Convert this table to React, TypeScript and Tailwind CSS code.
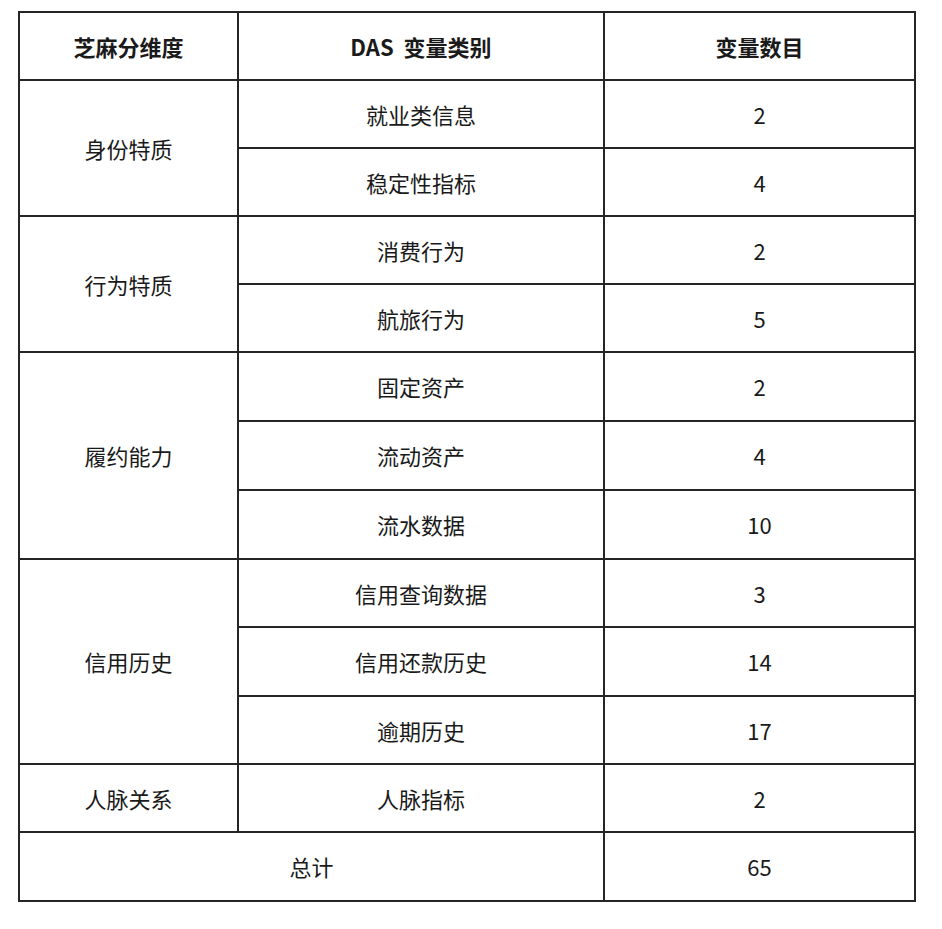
import React from "react";

const font = { fontFamily: '"Noto Sans CJK SC", "Noto Sans", sans-serif' };

type Row = { dim?: string; span?: number; cat: string; n: string; h: number };

const rows: Row[] = [
  { dim: "身份特质", span: 2, cat: "就业类信息", n: "2", h: 68 },
  { cat: "稳定性指标", n: "4", h: 68 },
  { dim: "行为特质", span: 2, cat: "消费行为", n: "2", h: 68 },
  { cat: "航旅行为", n: "5", h: 68 },
  { dim: "履约能力", span: 3, cat: "固定资产", n: "2", h: 69 },
  { cat: "流动资产", n: "4", h: 69 },
  { cat: "流水数据", n: "10", h: 69 },
  { dim: "信用历史", span: 3, cat: "信用查询数据", n: "3", h: 68 },
  { cat: "信用还款历史", n: "14", h: 69 },
  { cat: "逾期历史", n: "17", h: 68 },
  { dim: "人脉关系", span: 1, cat: "人脉指标", n: "2", h: 68 },
];

export default function App() {
  const cell = "border-2 border-[#252525] text-center align-middle p-0";
  return (
    <div className="w-[942px] h-[929px] bg-white pt-[11px] pl-[18px]" style={font}>
      <table className="border-collapse w-[896px] text-[22px] text-[#1a1a1a] table-fixed">
        <colgroup>
          <col className="w-[219px]" />
          <col className="w-[366px]" />
          <col className="w-[311px]" />
        </colgroup>
        <tbody>
          <tr className="h-[68px]">
            <td className={`${cell} font-bold`}>芝麻分维度</td>
            <td className={`${cell} font-bold`}>DAS&nbsp; 变量类别</td>
            <td className={`${cell} font-bold`}>变量数目</td>
          </tr>
          {rows.map((r, i) => (
            <tr key={i} style={{ height: r.h }}>
              {r.dim && (
                <td className={cell} rowSpan={r.span}>
                  {r.dim}
                </td>
              )}
              <td className={cell}>{r.cat}</td>
              <td className={cell}>{r.n}</td>
            </tr>
          ))}
          <tr className="h-[69px]">
            <td className={cell} colSpan={2}>
              总计
            </td>
            <td className={cell}>65</td>
          </tr>
        </tbody>
      </table>
    </div>
  );
}
